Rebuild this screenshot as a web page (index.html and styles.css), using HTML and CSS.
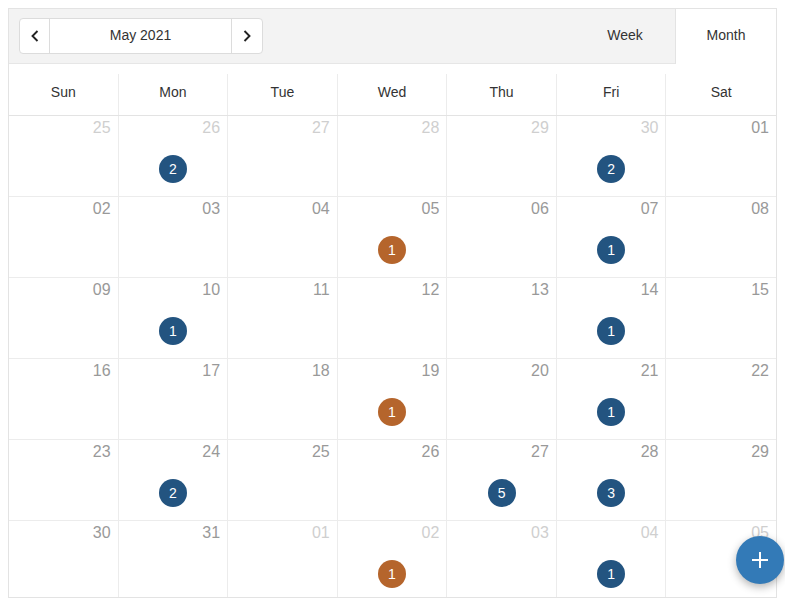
FILE: index.html
```html
<!DOCTYPE html>
<html>
<head>
<meta charset="utf-8">
<link rel="stylesheet" href="styles.css">
</head>
<body>
<div class="cal">
  <div class="toolbar">
    <div class="nav">
      <button class="nav-btn prev"><svg width="12" height="14" viewBox="0 0 12 14"><path d="M8.5 2 L3.5 7 L8.5 12" fill="none" stroke="#222" stroke-width="1.9"/></svg></button>
      <div class="nav-label">May 2021</div>
      <button class="nav-btn next"><svg width="12" height="14" viewBox="0 0 12 14"><path d="M3.5 2 L8.5 7 L3.5 12" fill="none" stroke="#222" stroke-width="1.9"/></svg></button>
    </div>
    <div class="tabs">
      <div class="tab">Week</div>
      <div class="tab active">Month</div>
    </div>
  </div>
  <div class="head">
    <div class="hcell">Sun</div><div class="hcell">Mon</div><div class="hcell">Tue</div><div class="hcell">Wed</div><div class="hcell">Thu</div><div class="hcell">Fri</div><div class="hcell">Sat</div>
  </div>
  <div class="grid">
    <div class="cell other"><span class="num">25</span></div>
    <div class="cell other"><span class="num">26</span><span class="badge blue">2</span></div>
    <div class="cell other"><span class="num">27</span></div>
    <div class="cell other"><span class="num">28</span></div>
    <div class="cell other"><span class="num">29</span></div>
    <div class="cell other"><span class="num">30</span><span class="badge blue">2</span></div>
    <div class="cell"><span class="num">01</span></div>

    <div class="cell"><span class="num">02</span></div>
    <div class="cell"><span class="num">03</span></div>
    <div class="cell"><span class="num">04</span></div>
    <div class="cell"><span class="num">05</span><span class="badge orange">1</span></div>
    <div class="cell"><span class="num">06</span></div>
    <div class="cell"><span class="num">07</span><span class="badge blue">1</span></div>
    <div class="cell"><span class="num">08</span></div>

    <div class="cell"><span class="num">09</span></div>
    <div class="cell"><span class="num">10</span><span class="badge blue">1</span></div>
    <div class="cell"><span class="num">11</span></div>
    <div class="cell"><span class="num">12</span></div>
    <div class="cell"><span class="num">13</span></div>
    <div class="cell"><span class="num">14</span><span class="badge blue">1</span></div>
    <div class="cell"><span class="num">15</span></div>

    <div class="cell"><span class="num">16</span></div>
    <div class="cell"><span class="num">17</span></div>
    <div class="cell"><span class="num">18</span></div>
    <div class="cell"><span class="num">19</span><span class="badge orange">1</span></div>
    <div class="cell"><span class="num">20</span></div>
    <div class="cell"><span class="num">21</span><span class="badge blue">1</span></div>
    <div class="cell"><span class="num">22</span></div>

    <div class="cell"><span class="num">23</span></div>
    <div class="cell"><span class="num">24</span><span class="badge blue">2</span></div>
    <div class="cell"><span class="num">25</span></div>
    <div class="cell"><span class="num">26</span></div>
    <div class="cell"><span class="num">27</span><span class="badge blue">5</span></div>
    <div class="cell"><span class="num">28</span><span class="badge blue">3</span></div>
    <div class="cell"><span class="num">29</span></div>

    <div class="cell last"><span class="num">30</span></div>
    <div class="cell last"><span class="num">31</span></div>
    <div class="cell last other"><span class="num">01</span></div>
    <div class="cell last other"><span class="num">02</span><span class="badge orange">1</span></div>
    <div class="cell last other"><span class="num">03</span></div>
    <div class="cell last other"><span class="num">04</span><span class="badge blue">1</span></div>
    <div class="cell last other"><span class="num">05</span></div>
  </div>
</div>
<button class="fab"><svg width="18" height="18" viewBox="0 0 18 18"><path d="M9 1 V17 M1 9 H17" stroke="#fff" stroke-width="2"/></svg></button>
</body>
</html>
```
FILE: styles.css
```css
* { box-sizing: border-box; }
html, body { margin: 0; padding: 0; }
body {
  padding: 8px;
  font-family: "Liberation Sans", Arial, sans-serif;
  color: #333;
  background: #fff;
}
.cal {
  border: 1px solid #e3e3e3;
  width: 769px;
  height: 590px;
  display: flex;
  flex-direction: column;
}
.toolbar {
  height: 55px;
  background: #f3f3f3;
  display: flex;
  justify-content: space-between;
  flex-shrink: 0;
  border-bottom: 1px solid #e6e6e6;
}
.nav {
  margin: 9px 0 0 10px;
  height: 36px;
  display: flex;
  border: 1px solid #dcdcdc;
  border-radius: 4px;
  background: #fff;
}
.nav-btn {
  border: 0;
  background: transparent;
  padding: 0;
  display: flex;
  align-items: center;
  justify-content: center;
  cursor: pointer;
}
.prev { width: 30px; border-right: 1px solid #dcdcdc; }
.next { width: 31px; border-left: 1px solid #dcdcdc; }
.nav-label {
  width: 181px;
  display: flex;
  align-items: center;
  justify-content: center;
  padding-bottom: 2px;
  font-size: 14px;
  color: #333;
}
.tabs { display: flex; }
.tab {
  width: 100px;
  display: flex;
  align-items: center;
  justify-content: center;
  padding-bottom: 3px;
  font-size: 14px;
  color: #333;
}
.tab.active {
  width: 101px;
  background: #fff;
  border-left: 1px solid #e3e3e3;
  margin-bottom: -1px;
  padding-bottom: 4px;
}
.head {
  display: grid;
  grid-template-columns: repeat(7, 1fr);
  padding-top: 10px;
  border-bottom: 1px solid #e3e3e3;
  flex-shrink: 0;
}
.hcell {
  height: 41px;
  display: flex;
  align-items: center;
  justify-content: center;
  padding-bottom: 5px;
  font-size: 14px;
  color: #333;
  border-right: 1px solid #ececec;
}
.hcell:last-child { border-right: 0; }
.grid {
  display: grid;
  grid-template-columns: repeat(7, 1fr);
  grid-template-rows: repeat(5, 81px) 1fr;
  flex: 1;
}
.cell {
  position: relative;
  border-right: 1px solid #ececec;
  border-bottom: 1px solid #ececec;
  display: flex;
  flex-direction: column;
  align-items: center;
}
.cell:nth-child(7n) { border-right: 0; }
.cell.last { border-bottom: 0; }
.num {
  align-self: flex-end;
  padding: 3px 7px 0 0;
  font-size: 16px;
  line-height: 18px;
  color: #999;
}
.other .num { color: #cfcfcf; }
.badge {
  margin-top: 18px;
  width: 28px;
  height: 28px;
  border-radius: 50%;
  color: #fff;
  font-size: 14px;
  display: flex;
  align-items: center;
  justify-content: center;
}
.blue { background: #235480; }
.orange { background: #b5652c; }
.fab {
  position: fixed;
  left: 736px;
  top: 536px;
  width: 48px;
  height: 48px;
  border-radius: 50%;
  border: 0;
  background: #337ab7;
  box-shadow: 0 3px 8px rgba(0,0,0,0.3);
  display: flex;
  align-items: center;
  justify-content: center;
  padding: 0;
}
```
